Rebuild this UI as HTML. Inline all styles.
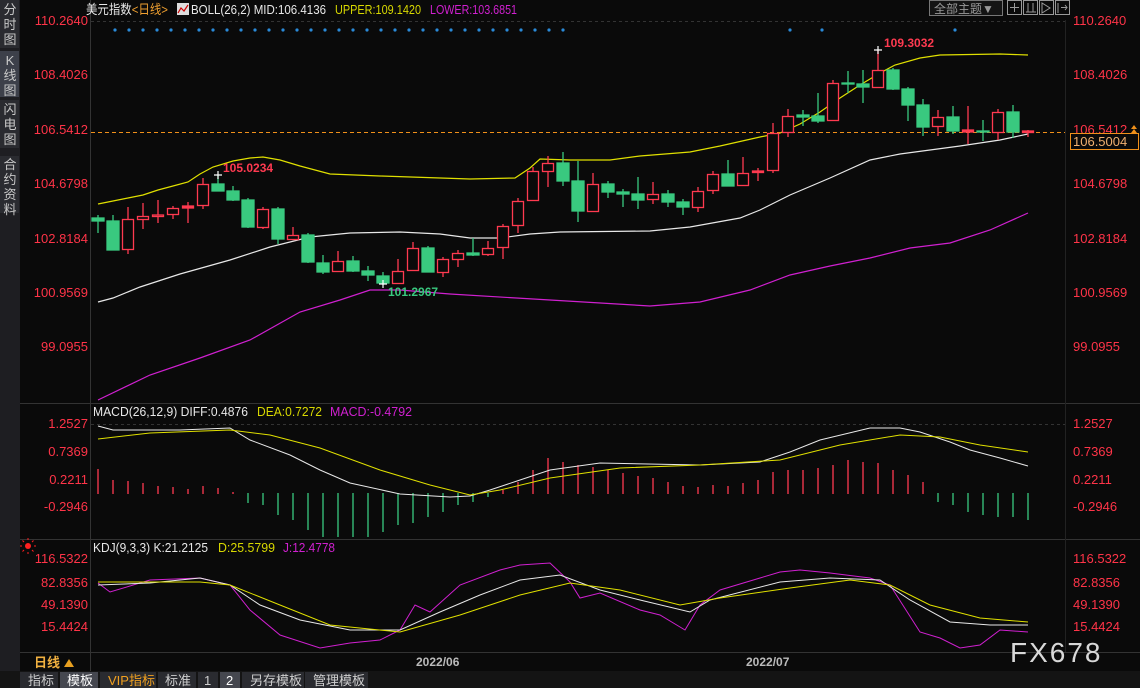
<!DOCTYPE html>
<html><head><meta charset="utf-8"><style>
body{margin:0;background:#0a0a0a;width:1140px;height:688px;overflow:hidden;font-family:"Liberation Sans","Noto Sans CJK SC",sans-serif}
svg{display:block}
</style></head><body>
<svg width="1140" height="688" xmlns="http://www.w3.org/2000/svg" font-family="Liberation Sans, Noto Sans CJK SC, sans-serif">
<rect width="1140" height="688" fill="#0a0a0a"/>
<rect x="0" y="0" width="20" height="671" fill="#1e1e22"/>
<rect x="0" y="0" width="19" height="48" fill="#2a2b30"/>
<rect x="0" y="51" width="19" height="46" fill="#3d404a"/>
<rect x="0" y="100" width="19" height="48" fill="#2a2b30"/>
<rect x="0" y="156" width="19" height="57" fill="#2a2b30"/>
<g fill="#c8c8c8" font-size="13" text-anchor="middle">
<text x="10" y="14">分</text><text x="10" y="29">时</text><text x="10" y="44">图</text>
<text x="10" y="65">K</text><text x="10" y="80">线</text><text x="10" y="95">图</text>
<text x="10" y="114">闪</text><text x="10" y="129">电</text><text x="10" y="144">图</text>
<text x="10" y="169">合</text><text x="10" y="184">约</text><text x="10" y="199">资</text><text x="10" y="214">料</text>
</g>
<line x1="90.5" y1="0" x2="90.5" y2="671" stroke="#333"/>
<line x1="20" y1="403.5" x2="1140" y2="403.5" stroke="#333"/>
<line x1="20" y1="539.5" x2="1140" y2="539.5" stroke="#333"/>
<line x1="20" y1="652.5" x2="1140" y2="652.5" stroke="#333"/>
<line x1="1065.5" y1="20" x2="1065.5" y2="652" stroke="#222"/>
<line x1="91" y1="21.5" x2="1065" y2="21.5" stroke="#333" stroke-dasharray="3,3"/>
<line x1="91" y1="424.5" x2="1065" y2="424.5" stroke="#333" stroke-dasharray="3,3"/>
<text x="86" y="14" font-size="13" fill="#e8e8e8" textLength="82" lengthAdjust="spacingAndGlyphs">美元指数<tspan fill="#f0a030">&lt;日线&gt;</tspan></text>
<rect x="177" y="3" width="12" height="12" fill="#ddd"/><polyline points="178,13 181,8 184,11 188,5" fill="none" stroke="#c00" stroke-width="1.2"/>
<text x="191" y="14" font-size="13" fill="#e8e8e8" textLength="135" lengthAdjust="spacingAndGlyphs">BOLL(26,2) MID:106.4136</text>
<text x="335" y="14" font-size="13" fill="#d8d800" textLength="86" lengthAdjust="spacingAndGlyphs">UPPER:109.1420</text>
<text x="430" y="14" font-size="13" fill="#d020d0" textLength="87" lengthAdjust="spacingAndGlyphs">LOWER:103.6851</text>
<rect x="929.5" y="0.5" width="73" height="15" fill="#141414" stroke="#777"/>
<text x="934" y="13" font-size="12" fill="#999">全部主题▼</text>
<g fill="none" stroke="#999"><rect x="1007.5" y="0.5" width="14" height="14"/><rect x="1023.5" y="0.5" width="14" height="14"/><rect x="1039.5" y="0.5" width="14" height="14"/><rect x="1055.5" y="0.5" width="14" height="14"/>
<path d="M1014.5 3v9M1010 7.5h9M1028 3v9M1033 3v9M1026 12h10M1042 3v10l8-5zM1058 3v10M1061 7.5h6M1065 5l2 2.5-2 2.5"/></g>
<g font-size="13" fill="#ff3448">
<g text-anchor="end"><text x="88" y="25">110.2640</text><text x="88" y="79">108.4026</text><text x="88" y="134">106.5412</text><text x="88" y="188">104.6798</text><text x="88" y="243">102.8184</text><text x="88" y="297">100.9569</text><text x="88" y="351">99.0955</text>
<text x="88" y="428">1.2527</text><text x="88" y="456">0.7369</text><text x="88" y="484">0.2211</text><text x="88" y="511">-0.2946</text>
<text x="88" y="563">116.5322</text><text x="88" y="587">82.8356</text><text x="88" y="609">49.1390</text><text x="88" y="631">15.4424</text></g>
<text x="1073" y="25">110.2640</text><text x="1073" y="79">108.4026</text><text x="1073" y="134">106.5412</text><text x="1073" y="188">104.6798</text><text x="1073" y="243">102.8184</text><text x="1073" y="297">100.9569</text><text x="1073" y="351">99.0955</text>
<text x="1073" y="428">1.2527</text><text x="1073" y="456">0.7369</text><text x="1073" y="484">0.2211</text><text x="1073" y="511">-0.2946</text>
<text x="1073" y="563">116.5322</text><text x="1073" y="587">82.8356</text><text x="1073" y="609">49.1390</text><text x="1073" y="631">15.4424</text>
</g>
<g fill="#2a8ad8">
<circle cx="115" cy="30" r="1.6"/><circle cx="129" cy="30" r="1.6"/><circle cx="143" cy="30" r="1.6"/><circle cx="157" cy="30" r="1.6"/><circle cx="171" cy="30" r="1.6"/><circle cx="185" cy="30" r="1.6"/><circle cx="199" cy="30" r="1.6"/><circle cx="213" cy="30" r="1.6"/><circle cx="227" cy="30" r="1.6"/><circle cx="241" cy="30" r="1.6"/><circle cx="255" cy="30" r="1.6"/><circle cx="269" cy="30" r="1.6"/><circle cx="283" cy="30" r="1.6"/><circle cx="297" cy="30" r="1.6"/><circle cx="311" cy="30" r="1.6"/><circle cx="325" cy="30" r="1.6"/><circle cx="339" cy="30" r="1.6"/><circle cx="353" cy="30" r="1.6"/><circle cx="367" cy="30" r="1.6"/><circle cx="381" cy="30" r="1.6"/><circle cx="395" cy="30" r="1.6"/><circle cx="409" cy="30" r="1.6"/><circle cx="423" cy="30" r="1.6"/><circle cx="437" cy="30" r="1.6"/><circle cx="451" cy="30" r="1.6"/><circle cx="465" cy="30" r="1.6"/><circle cx="479" cy="30" r="1.6"/><circle cx="493" cy="30" r="1.6"/><circle cx="507" cy="30" r="1.6"/><circle cx="521" cy="30" r="1.6"/><circle cx="535" cy="30" r="1.6"/><circle cx="549" cy="30" r="1.6"/><circle cx="563" cy="30" r="1.6"/>
<circle cx="790" cy="30" r="1.6"/><circle cx="822" cy="30" r="1.6"/><circle cx="955" cy="30" r="1.6"/>
</g>
<polyline fill="none" stroke="#e0e000" stroke-width="1.2" points="98,204 113,201 128,198 143,195 158,190 173,186 188,182 200,174 213,167 233,161 250,158 263,157 280,160 300,166 330,174 380,176 470,179 515,178 530,168 540,159 570,160 610,160 640,156 690,152 720,146 760,137 780,133 800,124 820,112 840,98 860,85 880,73 895,65 920,58 940,55 1000,54 1028,55"/>
<polyline fill="none" stroke="#e8e8e8" stroke-width="1.2" points="98,302 113,298 140,287 180,274 230,260 270,247 310,237 350,233 400,232 440,234 470,238 500,238 530,234 560,232 650,231 690,227 740,218 760,210 780,200 790,195 830,178 870,160 900,154 960,146 1000,140 1028,134"/>
<polyline fill="none" stroke="#d020d0" stroke-width="1.2" points="98,400 150,375 200,358 250,340 300,312 340,300 370,290 400,290 450,294 550,300 650,306 700,302 750,290 790,275 830,266 870,258 910,248 950,243 990,230 1028,213"/>
<line x1="91" y1="132.5" x2="1065" y2="132.5" stroke="#f0901a" stroke-dasharray="4,3"/>
<g stroke-width="1.3">
<g stroke="#39c97f" fill="#39c97f">
<line x1="98" y1="215" x2="98" y2="233"/><rect x="92" y="218" width="12" height="3"/>
<line x1="113" y1="215" x2="113" y2="250"/><rect x="107" y="221" width="12" height="29"/>
<line x1="218" y1="175" x2="218" y2="191"/><rect x="212" y="184" width="12" height="7"/>
<line x1="233" y1="186" x2="233" y2="201"/><rect x="227" y="191" width="12" height="9"/>
<line x1="248" y1="198" x2="248" y2="228"/><rect x="242" y="200" width="12" height="27"/>
<line x1="278" y1="207" x2="278" y2="244"/><rect x="272" y="209" width="12" height="30"/>
<line x1="308" y1="233" x2="308" y2="263"/><rect x="302" y="235" width="12" height="27"/>
<line x1="323" y1="255" x2="323" y2="274"/><rect x="317" y="263" width="12" height="9"/>
<line x1="353" y1="256" x2="353" y2="272"/><rect x="347" y="261" width="12" height="10"/>
<line x1="368" y1="266" x2="368" y2="281"/><rect x="362" y="271" width="12" height="4"/>
<line x1="383" y1="272" x2="383" y2="285"/><rect x="377" y="276" width="12" height="7"/>
<line x1="428" y1="246" x2="428" y2="272"/><rect x="422" y="248" width="12" height="24"/>
<line x1="473" y1="238" x2="473" y2="256"/><rect x="467" y="253" width="12" height="2"/>
<line x1="563" y1="152" x2="563" y2="186"/><rect x="557" y="163" width="12" height="18"/>
<line x1="578" y1="161" x2="578" y2="222"/><rect x="572" y="181" width="12" height="30"/>
<line x1="608" y1="181" x2="608" y2="198"/><rect x="602" y="184" width="12" height="8"/>
<line x1="623" y1="189" x2="623" y2="207"/><rect x="617" y="192" width="12" height="2"/>
<line x1="638" y1="177" x2="638" y2="209"/><rect x="632" y="194" width="12" height="6"/>
<line x1="668" y1="190" x2="668" y2="207"/><rect x="662" y="194" width="12" height="8"/>
<line x1="683" y1="199" x2="683" y2="215"/><rect x="677" y="202" width="12" height="5"/>
<line x1="728" y1="160" x2="728" y2="186"/><rect x="722" y="174" width="12" height="12"/>
<line x1="803" y1="110" x2="803" y2="126"/><rect x="797" y="115" width="12" height="2"/>
<line x1="818" y1="93" x2="818" y2="123"/><rect x="812" y="116" width="12" height="5"/>
<line x1="848" y1="71" x2="848" y2="93"/><rect x="842" y="83" width="12" height="1"/>
<line x1="863" y1="70" x2="863" y2="103"/><rect x="857" y="84" width="12" height="3"/>
<line x1="893" y1="68" x2="893" y2="90"/><rect x="887" y="70" width="12" height="19"/>
<line x1="908" y1="87" x2="908" y2="121"/><rect x="902" y="89" width="12" height="16"/>
<line x1="923" y1="99" x2="923" y2="136"/><rect x="917" y="105" width="12" height="22"/>
<line x1="953" y1="106" x2="953" y2="134"/><rect x="947" y="117" width="12" height="14"/>
<line x1="983" y1="120" x2="983" y2="141"/><rect x="977" y="131" width="12" height="1"/>
<line x1="1013" y1="105" x2="1013" y2="138"/><rect x="1007" y="112" width="12" height="20"/>
</g>
<g stroke="#ff3a50" fill="#0a0a0a">
<line x1="128" y1="207" x2="128" y2="254"/><rect x="122.5" y="219.5" width="11" height="30"/>
<line x1="143" y1="203" x2="143" y2="229"/><rect x="137.5" y="216.5" width="11" height="3"/>
<line x1="158" y1="200" x2="158" y2="223"/><rect x="152.5" y="215" width="11" height="1.5"/>
<line x1="173" y1="206" x2="173" y2="219"/><rect x="167.5" y="208.5" width="11" height="6"/>
<line x1="188" y1="202" x2="188" y2="223"/><rect x="182.5" y="206" width="11" height="2" fill="#ff3a50"/>
<line x1="203" y1="178" x2="203" y2="209"/><rect x="197.5" y="184.5" width="11" height="21"/>
<line x1="263" y1="207" x2="263" y2="229"/><rect x="257.5" y="209.5" width="11" height="18"/>
<line x1="293" y1="227" x2="293" y2="240"/><rect x="287.5" y="235.5" width="11" height="4"/>
<line x1="338" y1="251" x2="338" y2="272"/><rect x="332.5" y="261.5" width="11" height="10"/>
<line x1="398" y1="259" x2="398" y2="283"/><rect x="392.5" y="271.5" width="11" height="12"/>
<line x1="413" y1="242" x2="413" y2="271"/><rect x="407.5" y="248.5" width="11" height="22"/>
<line x1="443" y1="257" x2="443" y2="277"/><rect x="437.5" y="259.5" width="11" height="13"/>
<line x1="458" y1="250" x2="458" y2="267"/><rect x="452.5" y="253.5" width="11" height="6"/>
<line x1="488" y1="241" x2="488" y2="256"/><rect x="482.5" y="248.5" width="11" height="6"/>
<line x1="503" y1="224" x2="503" y2="259"/><rect x="497.5" y="226.5" width="11" height="21"/>
<line x1="518" y1="198" x2="518" y2="233"/><rect x="512.5" y="201.5" width="11" height="24"/>
<line x1="533" y1="167" x2="533" y2="200"/><rect x="527.5" y="171.5" width="11" height="29"/>
<line x1="548" y1="156" x2="548" y2="187"/><rect x="542.5" y="163.5" width="11" height="8"/>
<line x1="593" y1="173" x2="593" y2="212"/><rect x="587.5" y="184.5" width="11" height="27"/>
<line x1="653" y1="182" x2="653" y2="204"/><rect x="647.5" y="194.5" width="11" height="5"/>
<line x1="698" y1="187" x2="698" y2="212"/><rect x="692.5" y="191.5" width="11" height="16"/>
<line x1="713" y1="171" x2="713" y2="194"/><rect x="707.5" y="174.5" width="11" height="16"/>
<line x1="743" y1="157" x2="743" y2="185"/><rect x="737.5" y="173.5" width="11" height="12"/>
<line x1="758" y1="168" x2="758" y2="181"/><rect x="752.5" y="171" width="11" height="1.5" fill="#ff3a50"/>
<line x1="773" y1="123" x2="773" y2="173"/><rect x="767.5" y="133.5" width="11" height="37"/>
<line x1="788" y1="109" x2="788" y2="137"/><rect x="782.5" y="116.5" width="11" height="16"/>
<line x1="833" y1="80" x2="833" y2="120"/><rect x="827.5" y="83.5" width="11" height="37"/>
<line x1="878" y1="50" x2="878" y2="87"/><rect x="872.5" y="70.5" width="11" height="17"/>
<line x1="938" y1="110" x2="938" y2="136"/><rect x="932.5" y="117.5" width="11" height="9"/>
<line x1="968" y1="106" x2="968" y2="144"/><rect x="962.5" y="130" width="11" height="2" fill="#ff3a50"/>
<line x1="998" y1="109" x2="998" y2="140"/><rect x="992.5" y="112.5" width="11" height="20"/>
<line x1="1028" y1="130" x2="1028" y2="137"/><rect x="1022.5" y="131" width="11" height="1.5" fill="#ff3a50"/>
</g>
</g>
<g stroke="#fff" stroke-width="1.2"><path d="M214 175h8M218 171v8M379 284h8M383 280v8M874 50h8M878 46v8"/></g>
<text x="223" y="172" font-size="12" font-weight="bold" fill="#ff3a50">105.0234</text>
<text x="388" y="296" font-size="12" font-weight="bold" fill="#39c97f">101.2967</text>
<text x="884" y="47" font-size="12" font-weight="bold" fill="#ff3a50">109.3032</text>
<rect x="1070.5" y="133.5" width="68" height="16" fill="#0a0a0a" stroke="#f0901a"/>
<text x="1073" y="146" font-size="13" fill="#f0b070">106.5004</text>
<path d="M1131 129l3-4 3 4zM1131 133l3-4 3 4z" fill="#f0901a"/>
<text x="93" y="416" font-size="13" fill="#e8e8e8" textLength="155" lengthAdjust="spacingAndGlyphs">MACD(26,12,9) DIFF:0.4876</text>
<text x="257" y="416" font-size="13" fill="#d8d800" textLength="65" lengthAdjust="spacingAndGlyphs">DEA:0.7272</text>
<text x="330" y="416" font-size="13" fill="#d020d0" textLength="82" lengthAdjust="spacingAndGlyphs">MACD:-0.4792</text>
<g stroke="#ff3a50" stroke-width="1.3">
<path d="M98 494V469M113 494V480M128 494V481M143 494V483M158 494V486M173 494V487M188 494V489M203 494V486M218 494V488M233 494V492
M503 494V490M518 494V482M533 494V470M548 494V458M563 494V462M578 494V465M593 494V467M608 494V470M623 494V473M638 494V476M653 494V478M668 494V482M683 494V486M698 494V487M713 494V485M728 494V486M743 494V483M758 494V480M773 494V472M788 494V470M803 494V470M818 494V468M833 494V465M848 494V460M863 494V462M878 494V463M893 494V470M908 494V475M923 494V482"/>
</g>
<g stroke="#39c97f" stroke-width="1.3">
<path d="M248 493V503M263 493V505M278 493V515M293 493V520M308 493V530M323 493V537M338 493V537M353 493V537M368 493V537M383 493V532M398 493V525M413 493V523M428 493V517M443 493V512M458 493V505M473 493V502M488 493V497
M938 493V502M953 493V505M968 493V512M983 493V515M998 493V517M1013 493V517M1028 493V520"/>
</g>
<polyline fill="none" stroke="#e8e8e8" points="98,426 113,430 180,430 230,428 250,440 290,455 320,470 350,483 400,494 450,497 470,496 490,490 520,480 550,470 600,463 700,465 760,462 790,452 820,440 870,428 900,428 920,432 950,442 970,450 1000,458 1028,466"/>
<polyline fill="none" stroke="#e0e000" points="98,439 150,433 230,430 270,435 320,448 380,470 430,485 470,495 500,490 550,478 620,468 700,465 780,460 840,445 900,435 940,437 980,445 1028,452"/>
<circle cx="28" cy="546" r="3" fill="#ff2020"/><g stroke="#ff2020" stroke-width="1"><path d="M22 546h-2M34 546h2M28 540v-2M28 552v2M24 542l-1.5-1.5M32 542l1.5-1.5M24 550l-1.5 1.5M32 550l1.5 1.5"/></g>
<text x="93" y="552" font-size="13" fill="#e8e8e8" textLength="115" lengthAdjust="spacingAndGlyphs">KDJ(9,3,3) K:21.2125</text>
<text x="218" y="552" font-size="13" fill="#d8d800" textLength="57" lengthAdjust="spacingAndGlyphs">D:25.5799</text>
<text x="283" y="552" font-size="13" fill="#d020d0" textLength="52" lengthAdjust="spacingAndGlyphs">J:12.4778</text>
<polyline fill="none" stroke="#d020d0" points="98,583 110,592 150,580 200,578 230,585 250,610 280,635 320,648 350,643 380,640 400,630 415,605 430,612 460,585 500,570 520,565 550,563 570,582 580,598 600,593 640,610 660,615 685,630 700,605 720,590 760,578 780,572 800,570 830,573 870,578 890,585 920,632 940,638 960,648 980,645 1000,630 1028,632"/>
<polyline fill="none" stroke="#e8e8e8" points="98,585 150,583 200,578 230,585 260,605 300,620 350,630 400,630 440,612 480,595 520,580 560,575 600,590 640,600 690,612 710,600 780,582 830,578 880,580 910,600 950,622 990,625 1028,625"/>
<polyline fill="none" stroke="#e0e000" points="98,582 150,582 200,582 230,585 280,605 330,625 400,632 460,615 520,595 570,583 620,590 680,605 720,598 790,588 850,580 890,585 930,605 980,618 1028,622"/>
<text x="34" y="667" font-size="13" font-weight="bold" fill="#f0b040">日线</text>
<path d="M64 667l5-8 5 8z" fill="#e8a020"/>
<text x="416" y="666" font-size="12" font-weight="bold" fill="#bbb">2022/06</text>
<text x="746" y="666" font-size="12" font-weight="bold" fill="#bbb">2022/07</text>
<text x="1010" y="662" font-size="28" fill="#d8d8d8" letter-spacing="2">FX678</text>
<rect x="0" y="671" width="1140" height="17" fill="#141414"/>
<g fill="#2a2b30"><rect x="20" y="672" width="38" height="16"/><rect x="100" y="672" width="56" height="16"/><rect x="158" y="672" width="38" height="16"/><rect x="198" y="672" width="20" height="16"/><rect x="242" y="672" width="62" height="16"/><rect x="305" y="672" width="63" height="16"/></g>
<rect x="60" y="672" width="38" height="16" fill="#45474f"/><rect x="220" y="672" width="20" height="16" fill="#45474f"/>
<g font-size="13" fill="#cfcfcf"><text x="28" y="685">指标</text><text x="67" y="685" fill="#fff">模板</text><text x="108" y="685" fill="#f0a020">VIP指标</text><text x="165" y="685">标准</text><text x="204" y="685">1</text><text x="226" y="685" fill="#fff">2</text><text x="250" y="685">另存模板</text><text x="313" y="685">管理模板</text></g>
</svg>
</body></html>
